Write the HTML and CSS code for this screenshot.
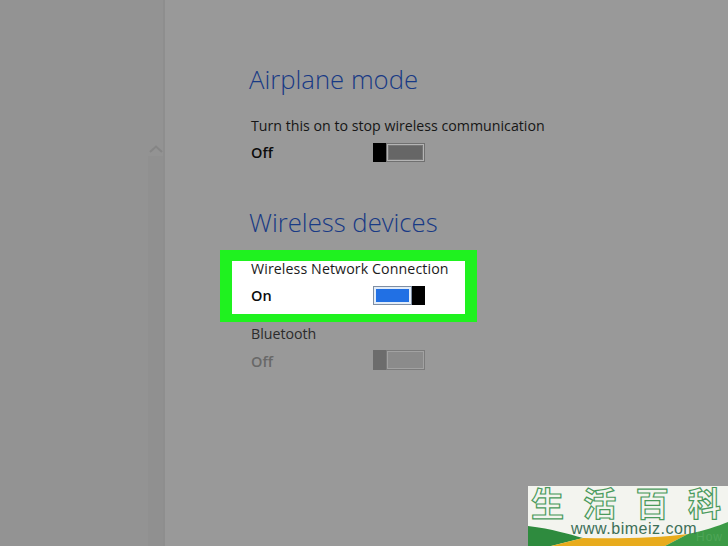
FILE: index.html
```html
<!DOCTYPE html>
<html lang="en">
<head>
<meta charset="utf-8">
<title>Wireless settings</title>
<link rel="stylesheet" href="styles.css">
</head>
<body>
<div class="page">
  <aside class="side">
    <svg class="chev" width="16" height="10" viewBox="0 0 16 10"><path d="M2 8 L8 2.500 L14 8" fill="none" stroke="#858585" stroke-width="2"/></svg>
    <div class="side-strip"></div>
  </aside>
  <main class="main">
    <h2 class="head head-first">Airplane mode</h2>
    <div class="setting">
      <div class="label">Turn this on to stop wireless communication</div>
      <div class="row">
        <span class="state">Off</span>
        <span class="toggle toggle-off"><span class="knob"></span><span class="track"></span></span>
      </div>
    </div>
    <h2 class="head head-second">Wireless devices</h2>
    <div class="setting highlight">
      <div class="label">Wireless Network Connection</div>
      <div class="row">
        <span class="state state-on">On</span>
        <span class="toggle toggle-on"><span class="track"></span><span class="knob"></span></span>
      </div>
    </div>
    <div class="setting disabled">
      <div class="label">Bluetooth</div>
      <div class="row">
        <span class="state">Off</span>
        <span class="toggle toggle-dis"><span class="knob"></span><span class="track"></span></span>
      </div>
    </div>
  </main>
</div>
<div class="logo">
  <svg class="swoosh" width="200" height="30" viewBox="0 0 200 30">
    <path d="M0 10 C25 13 40 18 55 22 L23 30 L0 30 Z" fill="#2e8b3e"/>
    <path d="M23 30 L55 22 C90 23 130 22 160 18 L137 30 Z" fill="#e8ab1c"/>
    <path d="M137 30 L160 18 C175 15 190 10 200 6 L200 30 Z" fill="#3c9a46"/>
  </svg>
  <div class="logo-title"><span>生</span><span>活</span><span>百</span><span>科</span></div>
  <div class="logo-url">www.bimeiz.com</div>
  <div class="logo-mark">How</div>
</div>
</body>
</html>
```
FILE: styles.css
```css
* { box-sizing: border-box; }
html, body { margin: 0; padding: 0; }
body {
  width: 728px;
  height: 546px;
  overflow: hidden;
  background: #999999;
  font-family: "Open Sans", "Noto Sans", sans-serif;
  position: relative;
}
.page { display: flex; height: 546px; }
.side {
  width: 165px;
  flex: none;
  background: #939393;
  border-right: 2px solid #8e8e8e;
  position: relative;
}
.chev { position: absolute; left: 148px; top: 144px; }
.side-strip {
  position: absolute;
  left: 148px; right: 0; top: 156px; bottom: 0;
  background: #909090;
}
.main { flex: 1; padding: 62px 0 0 84px; }
.head {
  margin: 0;
  font-weight: 300;
  font-size: 25.700px;
  line-height: 36px;
  color: #183a85;
}
.head-second { margin-top: 40px; }
.setting { padding-left: 2px; }
.head-first { margin-bottom: 18px; }
.label { font-size: 14.200px; line-height: 20px; color: #161616; }
.row { display: flex; align-items: center; height: 26px; margin-top: 3px; }
.state { width: 122px; font-size: 14.500px; font-weight: 600; color: #0c0c0c; }
.toggle {
  display: flex;
  width: 52px;
  height: 19px;
}
.knob { width: 13px; background: #000; flex: none; }
.track { flex: 1; border: 1px solid; }
.toggle-off .track {
  background: #666666;
  border-color: #707070;
  box-shadow: inset 0 0 0 1px #b4b4b4, inset 0 0 0 2px #777777;
}
.highlight {
  margin: 9px 0 0 -29px;
  width: 257px;
  height: 72px;
  background: #fff;
  border: solid #1ff21f;
  border-width: 11px 12px 8px 12px;
  padding: 0 0 0 19px;
}
.highlight .label { line-height: 15px; color: #1c1c1c; letter-spacing: 0.100px; }
.highlight .row { margin-top: 1px; height: 36px; }
.toggle-on .track {
  background: #2170e4;
  border-color: #7f8ea3;
  box-shadow: inset 0 0 0 2px #e2ecf8;
}
.disabled { margin-top: 2px; }
.disabled .row { margin-top: 4px; }
.disabled .label { color: #2b2b2b; }
.disabled .state { color: #686868; }
.toggle-dis { height: 20px; margin-top: -2px; }
.toggle-dis .knob { background: #6c6c6c; }
.toggle-dis .track {
  background: #8b8b8b;
  border-color: #7b7b7b;
  box-shadow: inset 0 0 0 1px #a2a2a2;
}
.logo {
  position: absolute;
  left: 528px; top: 486px;
  width: 200px; height: 60px;
  background: #f3f4ef;
}
.swoosh { position: absolute; left: 0; bottom: 0; }
.logo-title {
  position: relative;
  display: flex;
  justify-content: space-between;
  padding: 0 7px 0 3px;
  font-family: "Noto Sans CJK SC", sans-serif;
  font-size: 33px;
  font-weight: 700;
  line-height: 33px;
  color: #f3f4ef;
  -webkit-text-stroke: 1.200px #4a9a5c;
}
.logo-url {
  position: absolute;
  left: 43px; top: 33px;
  font-family: "Liberation Sans", sans-serif;
  font-size: 16px;
  line-height: 20px;
  letter-spacing: 0.500px;
  color: #3d6f57;
}
.logo-mark {
  position: absolute;
  left: 168px; top: 44px;
  font-family: "Liberation Sans", sans-serif;
  font-size: 12px;
  line-height: 14px;
  letter-spacing: 1px;
  color: #4fa658;
}
```
